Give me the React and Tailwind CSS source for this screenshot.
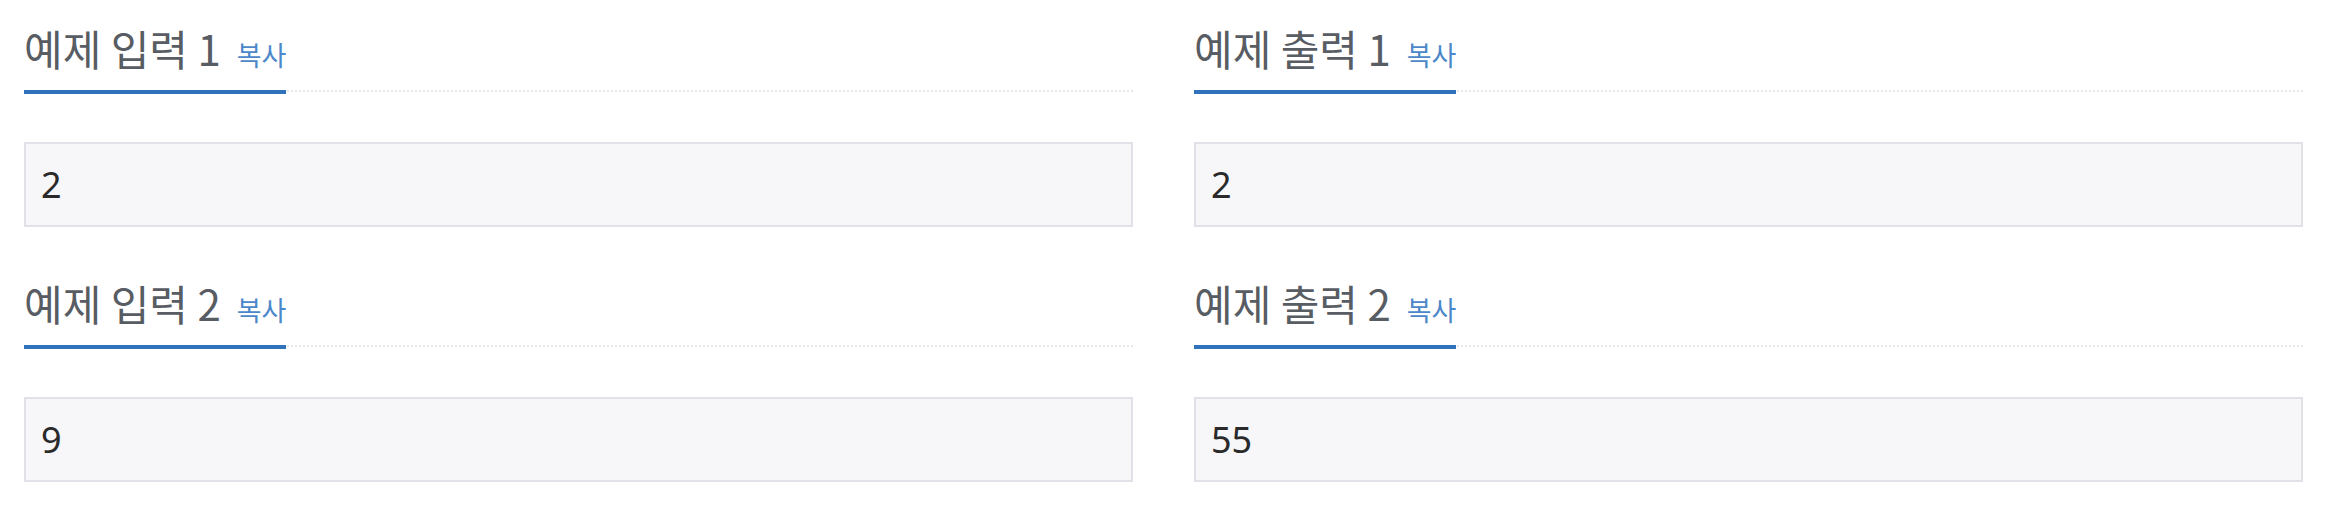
const samples = [
  { title: "예제 입력 1", data: "2" },
  { title: "예제 출력 1", data: "2" },
  { title: "예제 입력 2", data: "9" },
  { title: "예제 출력 2", data: "55" },
];

const Sample = ({ title, data }) => {
  return (
    <section>
      <div className="border-b-2 border-dotted border-[#e6e7ec]">
        <h2 className="inline-block pt-[19px] pb-[13px] -mb-[4px] border-b-4 border-[#3173bb] text-[42px] leading-[58px] font-normal text-[#585c63] whitespace-nowrap">
          {title}
          <span className="ml-[16px] text-[27px] leading-none text-[#4c88c9] cursor-pointer">복사</span>
        </h2>
      </div>
      <pre className="mt-[50px] border-2 border-[#e1e1e8] bg-[#f7f7f9] px-[15px] py-[15px] text-[36px] leading-[51px] text-[#2a2a2a] font-['Noto_Sans','Noto_Sans_CJK_KR',sans-serif]">
        {data}
      </pre>
    </section>
  );
};

const App = () => {
  return (
    <div className="w-[2350px] h-[516px] bg-white font-['Noto_Sans_CJK_KR','Noto_Sans',sans-serif]">
      <div className="w-[2303px] pl-[24px] grid grid-cols-2 gap-x-[61px] gap-y-[28px]">
        {samples.map((s) => (
          <Sample key={s.title} title={s.title} data={s.data} />
        ))}
      </div>
    </div>
  );
};

export default App;
